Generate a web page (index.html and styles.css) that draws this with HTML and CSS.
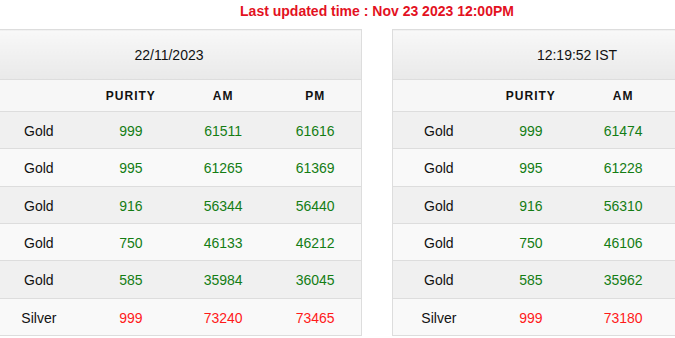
FILE: index.html
```html
<!DOCTYPE html>
<html lang="en">
<head>
<meta charset="utf-8">
<title>Gold Rates</title>
<link rel="stylesheet" href="styles.css">
</head>
<body>
<div class="page">
  <div class="updated">Last updated time : Nov 23 2023 12:00PM</div>
  <div class="tables">
    <table class="rates">
      <thead>
        <tr class="title-row"><th colspan="4" class="date-cell">22/11/2023</th></tr>
        <tr class="col-row"><th></th><th>PURITY</th><th>AM</th><th>PM</th></tr>
      </thead>
      <tbody>
        <tr><td class="metal">Gold</td><td class="gold">999</td><td class="gold">61511</td><td class="gold">61616</td></tr>
        <tr><td class="metal">Gold</td><td class="gold">995</td><td class="gold">61265</td><td class="gold">61369</td></tr>
        <tr><td class="metal">Gold</td><td class="gold">916</td><td class="gold">56344</td><td class="gold">56440</td></tr>
        <tr><td class="metal">Gold</td><td class="gold">750</td><td class="gold">46133</td><td class="gold">46212</td></tr>
        <tr><td class="metal">Gold</td><td class="gold">585</td><td class="gold">35984</td><td class="gold">36045</td></tr>
        <tr><td class="metal">Silver</td><td class="silver">999</td><td class="silver">73240</td><td class="silver">73465</td></tr>
      </tbody>
    </table>
    <table class="rates">
      <thead>
        <tr class="title-row"><th colspan="4">12:19:52 IST</th></tr>
        <tr class="col-row"><th></th><th>PURITY</th><th>AM</th><th></th></tr>
      </thead>
      <tbody>
        <tr><td class="metal">Gold</td><td class="gold">999</td><td class="gold">61474</td><td></td></tr>
        <tr><td class="metal">Gold</td><td class="gold">995</td><td class="gold">61228</td><td></td></tr>
        <tr><td class="metal">Gold</td><td class="gold">916</td><td class="gold">56310</td><td></td></tr>
        <tr><td class="metal">Gold</td><td class="gold">750</td><td class="gold">46106</td><td></td></tr>
        <tr><td class="metal">Gold</td><td class="gold">585</td><td class="gold">35962</td><td></td></tr>
        <tr><td class="metal">Silver</td><td class="silver">999</td><td class="silver">73180</td><td></td></tr>
      </tbody>
    </table>
  </div>
</div>
</body>
</html>
```
FILE: styles.css
```css
html, body {
  margin: 0;
  padding: 0;
  background: #ffffff;
  overflow: hidden;
}
body {
  font-family: "Liberation Sans", Arial, sans-serif;
  color: #111111;
}
.page {
  width: 770px;
  margin-left: -8px;
}
.updated {
  height: 29px;
  box-sizing: border-box;
  padding-top: 3px;
  text-align: center;
  font-size: 14px;
  font-weight: bold;
  line-height: 16px;
  color: #e3121f;
}
.tables {
  display: flex;
  gap: 30px;
}
.rates {
  width: 370px;
  flex: none;
  border-collapse: collapse;
  table-layout: fixed;
  border: 1px solid #dddddd;
  font-size: 14px;
}
.rates th,
.rates td {
  padding: 0;
  text-align: center;
  border-bottom: 1px solid #dddddd;
}
.title-row th {
  height: 49px;
  font-weight: normal;
  font-size: 14px;
  color: #111111;
  background: linear-gradient(#f8f8f8, #e9e9e9);
}
.title-row .date-cell {
  padding-right: 16px;
}
.col-row th {
  height: 31px;
  font-size: 12px;
  font-weight: bold;
  letter-spacing: 1px;
  color: #111111;
  background: #f7f7f7;
}
.rates tbody tr {
  height: 37.33px;
}
.rates tbody td {
  padding-top: 2px;
}
.rates tbody tr:nth-child(odd) {
  background: #f0f0f0;
}
.rates tbody tr:nth-child(even) {
  background: #f9f9f9;
}
.metal {
  color: #111111;
}
.gold {
  color: #147d14;
}
.silver {
  color: #ff1a1a;
}
```
